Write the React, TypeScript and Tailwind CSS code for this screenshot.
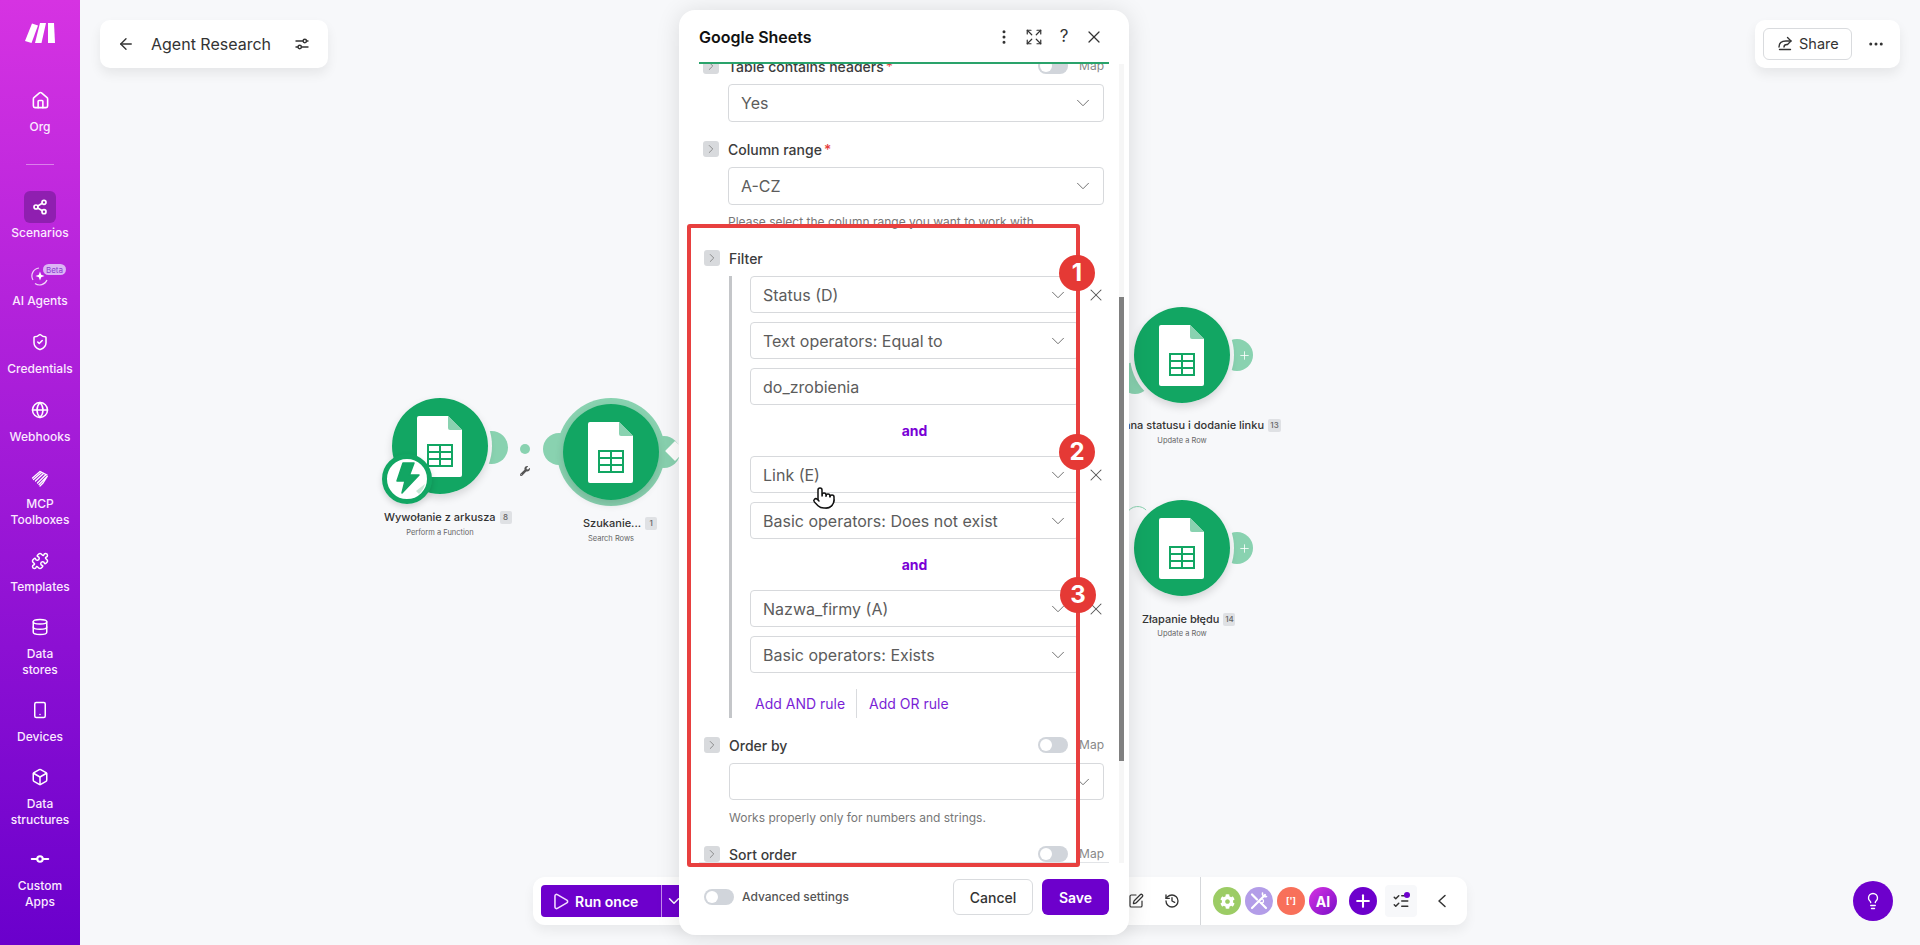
import React from "react";
import {
  House, Share2, ShieldCheck, Globe, Puzzle, Database, Smartphone, Box, GitCommitHorizontal,
  ArrowLeft, EllipsisVertical, Expand, X, ChevronDown, ChevronRight, Ellipsis, SquarePen, History,
  Plus, ListChecks, Play, Lightbulb, Pointer,
} from "lucide-react";
import { FaWrench, FaCog } from "react-icons/fa";

const GREEN = "#12a663";
const LIGHT = "#89d2b0";

function Logo() {
  return (
    <svg width="30" height="20" viewBox="0 0 30 20" fill="white">
      <path d="M7 .5 13 2.500 6.500 20 0 18z" />
      <path d="M15 0h6l-4.500 20h-6.500z" />
      <path d="M23 0h6l1 20h-7z" />
    </svg>
  );
}

function AgentIcon() {
  return (
    <svg width="20" height="20" viewBox="0 0 20 20" fill="none" stroke="white" strokeWidth="1.200">
      <path d="M3 14A8 8 0 0 1 9 2" opacity=".8" />
      <path d="M5 17.500A8 8 0 0 0 17 14" opacity=".8" />
      <path d="M10 5.500 11.200 8.800 14.500 10 11.200 11.200 10 14.500 8.800 11.200 5.500 10 8.800 8.800z" fill="white" stroke="none" />
    </svg>
  );
}

function McpIcon() {
  return (
    <svg width="18" height="18" viewBox="0 0 18 18" fill="none" stroke="white" strokeWidth="1.300" strokeLinecap="round">
      <path d="M1.500 8 9 1.500l7 3.500" />
      <path d="M2.500 9.500 10.500 2.500" />
      <path d="M4.500 11 12.500 3.500" />
      <path d="M6.500 13 14.500 5" />
      <path d="M8 14.500 16.500 6 12 13l-3 3" />
    </svg>
  );
}

function NavItem({ icon, label, className, gap }: { icon: React.ReactNode; label: string[]; className: string; gap: string }) {
  return (
    <div className={`flex flex-col items-center ${className}`}>
      <div className="relative flex h-6 w-6 items-center justify-center">{icon}</div>
      <div className={`text-center text-[12px] font-medium leading-4 text-[#fbeaff] ${gap}`}>
        {label.map((l) => (
          <div key={l}>{l}</div>
        ))}
      </div>
    </div>
  );
}

function Sidebar() {
  const s = { size: 18, strokeWidth: 2, color: "white" };
  return (
    <aside className="flex h-full w-20 shrink-0 flex-col items-center bg-linear-to-b/srgb from-[#d633e2] to-[#6a00cc] pt-[23px]">
      <div className="flex h-5 items-center justify-center">
        <Logo />
      </div>
      <NavItem className="mt-[45px]" gap="mt-[7px]" icon={<House {...s} size={19} />} label={["Org"]} />
      <div className="mt-[29px] h-px w-7 shrink-0 bg-white/40" />
      <div className="mt-[26px] flex h-8 w-8 shrink-0 items-center justify-center rounded-[6px] bg-[#8f1fb0]">
        <Share2 size={16} strokeWidth={2.500} color="white" />
      </div>
      <div className="mt-[2px] text-[12px] font-medium leading-4 text-[#fbeaff]">Scenarios</div>
      <NavItem
        className="mt-[23px]"
        gap="mt-[5px]"
        icon={
          <>
            <AgentIcon />
            <span className="absolute left-[15px] top-0 flex h-[11px] w-[23px] items-center justify-center rounded-full bg-[#dcb4f5] text-[8px] leading-none text-[#8a3cd0]">
              Beta
            </span>
          </>
        }
        label={["AI Agents"]}
      />
      <NavItem className="mt-[21px]" gap="mt-[7px]" icon={<ShieldCheck {...s} />} label={["Credentials"]} />
      <NavItem className="mt-[21px]" gap="mt-[7px]" icon={<Globe {...s} />} label={["Webhooks"]} />
      <NavItem className="mt-[22px]" gap="mt-[5px]" icon={<McpIcon />} label={["MCP", "Toolboxes"]} />
      <NavItem className="mt-[21px]" gap="mt-[6px]" icon={<Puzzle {...s} />} label={["Templates"]} />
      <NavItem className="mt-[20px]" gap="mt-[7px]" icon={<Database {...s} />} label={["Data", "stores"]} />
      <NavItem className="mt-[20px]" gap="mt-[7px]" icon={<Smartphone {...s} />} label={["Devices"]} />
      <NavItem className="mt-[20px]" gap="mt-[7px]" icon={<Box {...s} />} label={["Data", "structures"]} />
      <NavItem className="mt-[19px]" gap="mt-[7px]" icon={<GitCommitHorizontal size={22} strokeWidth={2.200} color="white" />} label={["Custom", "Apps"]} />
    </aside>
  );
}

function SheetNode({ className }: { className: string }) {
  return (
    <div className={`absolute h-24 w-24 rounded-full shadow-[0_4px_8px_rgba(0,0,0,0.14)] ${className}`}>
      <svg width="96" height="96" viewBox="0 0 96 96">
        <circle cx="48" cy="48" r="48" fill={GREEN} />
        <path d="M27 18H56L70 32V77a2 2 0 0 1-2 2H27a2 2 0 0 1-2-2V20a2 2 0 0 1 2-2z" fill="white" />
        <path d="M56 18 70 32H58a2 2 0 0 1-2-2z" fill={LIGHT} />
        <rect x="35" y="46" width="26" height="23" fill={GREEN} />
        {[48, 55, 62].map((y) =>
          [37, 49].map((x) => <rect key={`${x}-${y}`} x={x} y={y} width="10" height="5" fill="white" />)
        )}
      </svg>
    </div>
  );
}

function Canvas() {
  return (
    <>
      {/* node 1 */}
      <div className="absolute left-[475px] top-[431px] h-[33px] w-[33px] rounded-full bg-[#89d2b0]" />
      <div className="absolute left-[388px] top-[394px] h-[104px] w-[104px] rounded-full bg-[#f7f8fa]" />
      <SheetNode className="left-[392px] top-[398px]" />
      <div className="absolute left-[382px] top-[454px] h-[50px] w-[50px] rounded-full shadow-[0_3px_6px_rgba(0,0,0,0.15)]">
        <svg width="50" height="50" viewBox="0 0 50 50">
          <circle cx="25" cy="25" r="22.500" fill="white" stroke={GREEN} strokeWidth="5" />
          <path d="M34 37 43 30A20 20 0 0 1 37 40z" fill="#c6e8d6" />
          <path d="M21 9H32L27.500 21H37L20 39 23 27H15z" fill={GREEN} stroke={GREEN} strokeWidth="1.500" strokeLinejoin="round" />
        </svg>
      </div>
      <div className="absolute left-[384px] top-[509px] flex h-4 items-center gap-[4px] whitespace-nowrap text-[11px] font-medium text-[#333]">
        Wywołanie z arkusza
        <span className="flex h-[13px] w-[12px] items-center justify-center rounded-[2px] bg-[#dfe1e4] text-[8px] text-[#666]">8</span>
      </div>
      <div className="absolute left-[390px] top-[527px] w-[100px] text-center text-[7.500px] leading-3 text-[#666]">Perform a Function</div>

      {/* connector */}
      <div className="absolute left-[520px] top-[444px] h-[10px] w-[10px] rounded-full bg-[#89d2b0]" />
      <FaWrench className="absolute left-[520px] top-[466px] text-[#555]" size={10} />

      {/* node 2 */}
      <div className="absolute left-[543px] top-[433px] h-[32px] w-[32px] rounded-full bg-[#89d2b0]" />
      <div className="absolute left-[648px] top-[436px] h-[32px] w-[32px] rounded-full bg-[#89d2b0]" />
      <div className="absolute left-[668px] top-[444px] h-[14px] w-[14px] rotate-45 bg-white" />
      <div className="absolute left-[557px] top-[398px] h-[108px] w-[108px] rounded-full bg-[#89d2b0]" />
      <SheetNode className="left-[563px] top-[404px]" />
      <div className="absolute left-[583px] top-[515px] flex h-4 items-center gap-[4px] whitespace-nowrap text-[11px] font-medium text-[#333]">
        Szukanie...
        <span className="flex h-[13px] w-[12px] items-center justify-center rounded-[2px] bg-[#dfe1e4] text-[8px] text-[#666]">1</span>
      </div>
      <div className="absolute left-[561px] top-[533px] w-[100px] text-center text-[7.500px] leading-3 text-[#666]">Search Rows</div>

      {/* node 3 */}
      <div className="absolute left-[1119px] top-[362px] h-8 w-8 rounded-full bg-[#89d2b0]" />
      <div className="absolute left-[1221px] top-[339px] flex h-8 w-8 items-center justify-end rounded-full bg-[#89d2b0] pr-[2px]">
        <Plus size={13} strokeWidth={1.500} color="white" />
      </div>
      <div className="absolute left-[1130px] top-[303px] h-[104px] w-[104px] rounded-full bg-[#f7f8fa]" />
      <SheetNode className="left-[1134px] top-[307px]" />
      <div className="absolute right-[639px] top-[417px] flex h-4 items-center gap-[4px] whitespace-nowrap text-[11px] font-medium text-[#333]">
        Zmiana statusu i dodanie linku
        <span className="flex h-[13px] w-[13px] items-center justify-center rounded-[2px] bg-[#dfe1e4] text-[8px] text-[#666]">13</span>
      </div>
      <div className="absolute left-[1132px] top-[435px] w-[100px] text-center text-[7.500px] leading-3 text-[#666]">Update a Row</div>

      {/* node 4 */}
      <svg className="absolute left-[1125px] top-[505px]" width="24" height="10" viewBox="0 0 24 10" fill="none">
        <path d="M2 8A12 12 0 0 1 22 6" stroke={LIGHT} strokeWidth="1" />
      </svg>
      <div className="absolute left-[1221px] top-[532px] flex h-8 w-8 items-center justify-end rounded-full bg-[#89d2b0] pr-[2px]">
        <Plus size={13} strokeWidth={1.500} color="white" />
      </div>
      <div className="absolute left-[1130px] top-[496px] h-[104px] w-[104px] rounded-full bg-[#f7f8fa]" />
      <SheetNode className="left-[1134px] top-[500px]" />
      <div className="absolute left-[1142px] top-[611px] flex h-4 items-center gap-[4px] whitespace-nowrap text-[11px] font-medium text-[#333]">
        Złapanie błędu
        <span className="flex h-[13px] w-[12px] items-center justify-center rounded-[2px] bg-[#dfe1e4] text-[8px] text-[#666]">14</span>
      </div>
      <div className="absolute left-[1132px] top-[628px] w-[100px] text-center text-[7.500px] leading-3 text-[#666]">Update a Row</div>
    </>
  );
}

function TopBars() {
  return (
    <>
      <div className="absolute left-[100px] top-5 flex h-12 w-[228px] items-center rounded-[10px] bg-white pl-[17px] shadow-[0_6px_12px_rgba(0,0,0,0.07)]">
        <ArrowLeft size={18} strokeWidth={1.800} color="#333" />
        <span className="ml-[16px] text-[16px] text-[#333]">Agent Research</span>
        <svg className="ml-[23px]" width="16" height="16" viewBox="0 0 16 16" fill="none" stroke="#333" strokeWidth="1.400" strokeLinecap="round">
          <path d="M2 5h7M12.500 5H14M2 11h2M7.500 11H14" />
          <circle cx="10.800" cy="5" r="1.700" />
          <circle cx="5.700" cy="11" r="1.700" />
        </svg>
      </div>
      <div className="absolute left-[1755px] top-5 flex h-12 w-[145px] items-center rounded-[10px] bg-white pl-2 shadow-[0_6px_12px_rgba(0,0,0,0.07)]">
        <div className="flex h-8 w-[89px] items-center rounded-[6px] border border-[#d9dbde] pl-[13px]">
          <svg width="16" height="16" viewBox="0 0 16 16" fill="none" stroke="#333" strokeWidth="1.400" strokeLinecap="round" strokeLinejoin="round">
            <path d="M2.500 13.500h11" />
            <path d="M2 11c0-4 2.500-6 7-6h5" />
            <path d="M10.500 1.500 14 5l-3.500 3.500" />
            <path d="M7 11c0-1.500 1-2.500 3-2.500" />
          </svg>
          <span className="ml-[6px] text-[14.500px] text-[#333]">Share</span>
        </div>
        <Ellipsis className="ml-[15px]" size={18} strokeWidth={2} color="#333" />
      </div>
    </>
  );
}

function Toolbar() {
  return (
    <div className="absolute left-[533px] top-[877px] flex h-12 w-[934px] items-center justify-between rounded-[12px] bg-white pl-2 shadow-[0_6px_12px_rgba(0,0,0,0.06)]">
      <div className="flex h-8 w-[161px] items-center rounded-[4px] bg-[#6d00cc] text-white">
        <Play className="ml-[10px]" size={19} strokeWidth={2} color="#f2d9ff" />
        <span className="ml-[5px] text-[14px] font-semibold">Run once</span>
        <div className="ml-[23px] h-full w-px bg-[#c48bec]" />
        <ChevronDown className="ml-[3px]" size={18} color="white" />
      </div>
      <div className="flex items-center">
        <div className="flex h-9 w-9 items-center justify-center">
          <SquarePen size={16} strokeWidth={1.800} color="#333" />
        </div>
        <div className="flex h-9 w-9 items-center justify-center">
          <History size={16} strokeWidth={2} color="#333" />
        </div>
        <div className="ml-[10px] h-12 w-px bg-[#d5d7da]" />
        <div className="ml-3 flex h-7 w-7 items-center justify-center rounded-full bg-[#9ccc65]">
          <FaCog size={15} color="white" />
        </div>
        <div className="ml-1 flex h-7 w-7 items-center justify-center rounded-full bg-[#b39de8]">
          <svg width="20" height="20" viewBox="0 0 20 20" fill="none" stroke="white" strokeLinecap="round" strokeWidth="2.200">
            <path d="M3 3.500 8 8.500M17 17l-5-5M3 17 16 4" />
            <path d="M17.500 5.500a3 3 0 0 1-4-3.500" strokeWidth="1.600" />
            <circle cx="12.500" cy="10" r="2" strokeWidth="1.200" />
          </svg>
        </div>
        <div className="ml-1 flex h-7 w-7 items-center justify-center rounded-full bg-[#f8705a] text-[9px] font-bold text-white">[']</div>
        <div className="ml-1 flex h-7 w-7 items-center justify-center rounded-full bg-linear-to-br/srgb from-[#d633e2] to-[#7a0fc8] text-[14px] font-bold text-white">AI</div>
        <div className="ml-3 flex h-7 w-7 items-center justify-center rounded-full bg-[#6d00cc]">
          <Plus size={20} strokeWidth={2.500} color="white" />
        </div>
        <div className="relative ml-2 flex h-8 w-8 items-center justify-center rounded-[4px] bg-[#f7f8fa]">
          <ListChecks size={18} strokeWidth={2} color="#333" />
          <span className="absolute right-[7px] top-[7px] h-[6px] w-[6px] rounded-full bg-[#6d00cc]" />
        </div>
        <div className="flex w-[50px] justify-center">
          <svg width="10" height="14" viewBox="0 0 10 14" fill="none" stroke="#333" strokeWidth="1.500" strokeLinecap="round" strokeLinejoin="round">
            <path d="M8 1.500 2 7l6 5.500" />
          </svg>
        </div>
      </div>
    </div>
  );
}

function Toggle() {
  return (
    <div className="flex h-4 w-[30px] shrink-0 items-center rounded-full bg-[#d1d5db] pl-[2px]">
      <div className="h-3 w-3 rounded-full bg-white" />
    </div>
  );
}

function Chip() {
  return (
    <div className="flex h-4 w-4 shrink-0 items-center justify-center rounded-[3px] bg-[#d8dadd]">
      <ChevronRight size={14} strokeWidth={1.500} color="#808080" />
    </div>
  );
}

function Row({ label, req, map, className, inset }: { label: string; req?: boolean; map?: boolean; className: string; inset: string }) {
  return (
    <div className={`flex h-4 items-center ${inset} ${className}`}>
      <Chip />
      <span className="ml-[9px] text-[14px] font-medium text-[#3c3c3c]">
        {label}
        {req && <span className="ml-[2px] text-[#e53e3e]">*</span>}
      </span>
      {map && (
        <div className="ml-auto flex items-center">
          <Toggle />
          <span className="ml-[11px] text-[12px] text-[#888]">Map</span>
        </div>
      )}
    </div>
  );
}

function Select({ text, className, input }: { text?: string; className: string; input?: boolean }) {
  return (
    <div className={`flex items-center justify-between rounded-[4px] border border-[#d7d9dc] bg-white pl-3 pr-[9px] ${className}`}>
      <span className="text-[16px] text-[#5c5c5c]">{text}</span>
      {!input && <ChevronDown size={22} strokeWidth={1} color="#666" />}
    </div>
  );
}

function Rule({ text, x, className, input }: { text: string; x?: boolean; className?: string; input?: boolean }) {
  return (
    <div className={`flex items-center ${className ?? ""}`}>
      <Select text={text} input={input} className="h-[37px] w-[329px] shrink-0" />
      {x && (
        <div className="flex w-[34px] shrink-0 justify-center">
          <X size={20} strokeWidth={1.250} color="#555" />
        </div>
      )}
    </div>
  );
}

function And() {
  return <div className="flex h-[51px] w-[329px] items-center justify-center text-[14px] font-bold text-[#7a00d6]">and</div>;
}

function Modal() {
  return (
    <div className="absolute left-[679px] top-[10px] flex h-[925px] w-[450px] flex-col rounded-[16px] bg-white shadow-[0_2px_24px_rgba(0,0,0,0.12)]">
      <div className="flex h-[52px] shrink-0 items-center px-5 pt-[2px]">
        <span className="text-[16px] font-semibold text-[#111]">Google Sheets</span>
        <div className="ml-auto flex items-center">
          <div className="flex w-[30px] justify-center"><EllipsisVertical size={18} strokeWidth={2} color="#333" /></div>
          <div className="flex w-[30px] justify-center"><Expand size={18} strokeWidth={1.600} color="#333" /></div>
          <div className="w-[30px] text-center text-[17px] text-[#333]">?</div>
          <div className="flex w-[30px] justify-center"><X size={20} strokeWidth={1.500} color="#333" /></div>
        </div>
      </div>
      <div className="mx-5 h-[2px] shrink-0 bg-[#2aa36b]" />
      <div className="relative h-[799px] shrink-0 overflow-hidden">
        <div className="pl-[24px] pr-[25px]">
          <Row className="-mt-[6px]" inset="" label="Table contains headers" req map />
          <Select text="Yes" className="ml-[25px] mt-[10px] h-[38px]" />
          <Row className="mt-[19px]" inset="" label="Column range" req />
          <Select text="A-CZ" className="ml-[25px] mt-[10px] h-[38px]" />
          <div className="ml-[25px] mt-[9px] text-[12px] leading-4 text-[#777]">Please select the column range you want to work with.</div>
          <Row className="mt-[20px]" inset="pl-px" label="Filter" />
          <div className="ml-[26px] mt-[10px] border-l-[3px] border-[#c4c6c9] pl-[18px]">
            <Rule text="Status (D)" x />
            <Rule text="Text operators: Equal to" className="mt-[9px]" />
            <Rule text="do_zrobienia" className="mt-[9px]" input />
            <And />
            <Rule text="Link (E)" x />
            <Rule text="Basic operators: Does not exist" className="mt-[9px]" />
            <And />
            <Rule text="Nazwa_firmy (A)" x />
            <Rule text="Basic operators: Exists" className="mt-[9px]" />
            <div className="mt-4 flex h-[29px] items-center text-[14px] text-[#7a1fd6]">
              <span className="ml-[5px]">Add AND rule</span>
              <div className="ml-[11px] mr-[12px] h-full w-px bg-[#d9dbde]" />
              <span>Add OR rule</span>
            </div>
          </div>
          <Row className="mt-[19px]" inset="pl-px" label="Order by" map />
          <Select className="ml-[26px] mt-[10px] h-[37px]" />
          <div className="ml-[26px] mt-[10px] text-[12px] leading-4 text-[#777]">Works properly only for numbers and strings.</div>
          <Row className="mt-[20px]" inset="pl-px" label="Sort order" map />
        </div>
        <div className="absolute bottom-0 right-5 h-px w-[410px] bg-[#e2e4e7]" />
        <div className="absolute right-[5px] top-0 h-full w-[5px] bg-[#f6f6f6]">
          <div className="mt-[233px] h-[464px] w-full bg-[#808080]" />
        </div>
      </div>
      <div className="flex flex-1 items-center pb-1 pl-[25px] pr-5">
        <Toggle />
        <span className="ml-2 text-[12px] font-medium text-[#555]">Advanced settings</span>
        <div className="ml-auto flex h-9 w-20 items-center justify-center rounded-[6px] border border-[#d9dbde] text-[14px] font-medium text-[#333]">Cancel</div>
        <div className="ml-[9px] flex h-9 w-[67px] items-center justify-center rounded-[6px] bg-[#6d00cc] text-[14px] font-semibold text-white">Save</div>
      </div>
    </div>
  );
}

function Annotations() {
  const n = "absolute flex h-9 w-9 items-center justify-center rounded-full bg-[#e53935] text-[24px] font-bold text-white";
  return (
    <>
      <div className="absolute left-[687px] top-[224px] h-[643px] w-[393px] rounded-[3px] border-4 border-[#e8403f]" />
      <div className={`${n} left-[1059px] top-[255px]`}>1</div>
      <div className={`${n} left-[1059px] top-[434px]`}>2</div>
      <div className={`${n} left-[1060px] top-[577px]`}>3</div>
      <Pointer className="absolute left-[812px] top-[486px]" size={24} strokeWidth={1.500} color="#111" fill="white" />
    </>
  );
}

export default function App() {
  return (
    <div className="relative flex h-[945px] w-full overflow-hidden bg-[#f7f8fa] font-['Inter',sans-serif]">
      <Sidebar />
      <main className="flex-1" />
      <Canvas />
      <TopBars />
      <Toolbar />
      <Modal />
      <div className="absolute left-[1853px] top-[881px] flex h-10 w-10 items-center justify-center rounded-full bg-[#6d00cc]">
        <Lightbulb size={18} strokeWidth={1.800} color="white" />
      </div>
      <Annotations />
    </div>
  );
}
